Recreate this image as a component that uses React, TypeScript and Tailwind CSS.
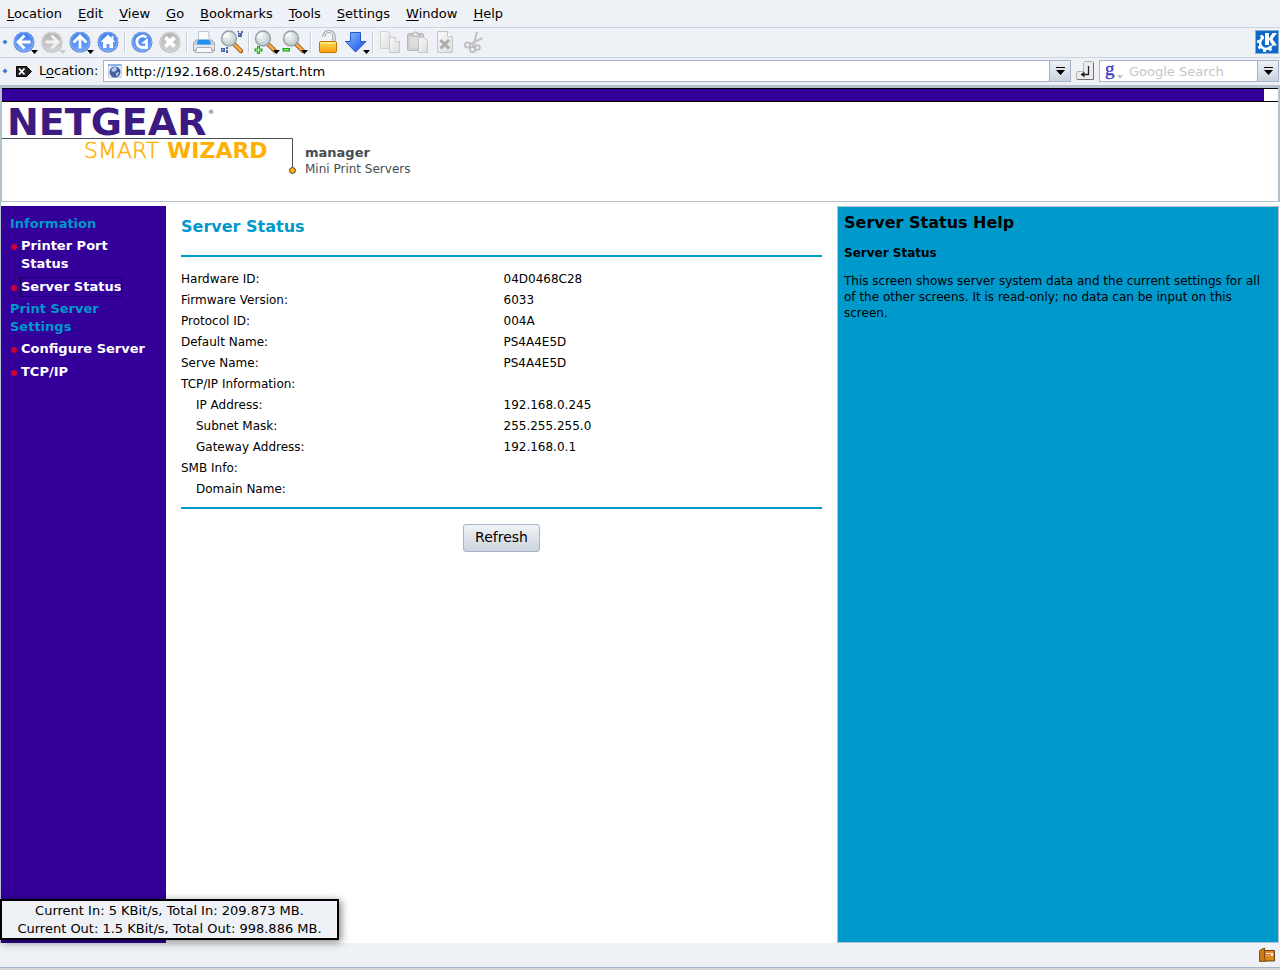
import React from 'react';

const menus = ['Location', 'Edit', 'View', 'Go', 'Bookmarks', 'Tools', 'Settings', 'Window', 'Help'];

const serverInfo = [
  { label: 'Hardware ID:', value: '04D0468C28' },
  { label: 'Firmware Version:', value: '6033' },
  { label: 'Protocol ID:', value: '004A' },
  { label: 'Default Name:', value: 'PS4A4E5D' },
  { label: 'Serve Name:', value: 'PS4A4E5D' },
  { label: 'TCP/IP Information:', value: '' },
  { label: 'IP Address:', value: '192.168.0.245', indent: true },
  { label: 'Subnet Mask:', value: '255.255.255.0', indent: true },
  { label: 'Gateway Address:', value: '192.168.0.1', indent: true },
  { label: 'SMB Info:', value: '' },
  { label: 'Domain Name:', value: '', indent: true },
];

const navGroups = [
  { title: 'Information', links: ['Printer Port Status', 'Server Status'] },
  { title: 'Print Server Settings', links: ['Configure Server', 'TCP/IP'] },
];

// Shared gradients for all toolbar icons
const IconDefs = () => (
  <svg width="0" height="0" className="absolute" aria-hidden="true">
    <defs>
      <linearGradient id="blue" x1="0" y1="0" x2="0" y2="1">
        <stop offset="0" stopColor="#3d7bea" />
        <stop offset="1" stopColor="#6fa6ff" />
      </linearGradient>
      <linearGradient id="grey" x1="0" y1="0" x2="0" y2="1">
        <stop offset="0" stopColor="#b4b4b4" />
        <stop offset="1" stopColor="#d0d0d0" />
      </linearGradient>
      <linearGradient id="gold" x1="0" y1="0" x2="0" y2="1">
        <stop offset="0" stopColor="#ffe05a" />
        <stop offset="1" stopColor="#ff9a08" />
      </linearGradient>
      <linearGradient id="arrow" x1="0" y1="0" x2="1" y2="1">
        <stop offset="0" stopColor="#8cc4ff" />
        <stop offset="1" stopColor="#1246e0" />
      </linearGradient>
      <radialGradient id="lens" cx="0.4" cy="0.35" r="0.7">
        <stop offset="0" stopColor="#f4f8f8" />
        <stop offset="1" stopColor="#b4c4c8" />
      </radialGradient>
      <linearGradient id="paper" x1="0" y1="0" x2="1" y2="1">
        <stop offset="0" stopColor="#fafafa" />
        <stop offset="1" stopColor="#dcdcdc" />
      </linearGradient>
    </defs>
  </svg>
);

interface OrbProps {
  disabled?: boolean;
  children: React.ReactNode;
}

const Orb: React.FC<OrbProps> = ({ disabled, children }) => (
  <g>
    <circle cx="14" cy="14.5" r="10.6" fill="#b9bfca" />
    <circle cx="14" cy="14" r="10.3" fill={disabled ? '#c0c0c0' : '#3c6fd6'} />
    <circle cx="14" cy="14" r="9.4" fill={disabled ? 'url(#grey)' : 'url(#blue)'} stroke={disabled ? '#d8d8d8' : '#8cb4fa'} strokeWidth="1" />
    {children}
  </g>
);

const DropMark = ({ disabled }: { disabled?: boolean }) => (
  <path d="M21 22h7l-3.500 4z" fill={disabled ? '#c8c8c8' : '#000'} />
);

const Magnifier = () => (
  <g>
    <path d="M16.500 16.500l6.500 6.500" stroke="#8a5a1c" strokeWidth="4.500" strokeLinecap="round" />
    <path d="M17 17l5.800 5.800" stroke="#f5a843" strokeWidth="2.800" strokeLinecap="round" />
    <circle cx="11" cy="10.500" r="7.500" fill="url(#lens)" stroke="#98a2a5" strokeWidth="1.400" />
    <path d="M6 9.500a5 5 0 0 1 5-4" stroke="#fff" strokeWidth="1.500" fill="none" />
  </g>
);

interface ToolProps {
  label: string;
  disabled?: boolean;
  children: React.ReactNode;
}

const Tool: React.FC<ToolProps> = ({ label, disabled, children }) => (
  <button type="button" aria-label={label} disabled={disabled} className="h-7 w-7 shrink-0">
    <svg viewBox="0 0 28 28" className="h-7 w-7 overflow-visible" aria-hidden="true">
      {children}
    </svg>
  </button>
);

const Separator = () => (
  <div className="flex h-7 w-[6px] shrink-0 items-center justify-center">
    <div className="h-[21px] w-[2px] border-l border-[#c5ced9] bg-white" />
  </div>
);

const Handle = () => (
  <svg viewBox="0 0 10 10" className="h-[10px] w-[10px] shrink-0" aria-hidden="true">
    <path d="M5 2.500L7.500 5 5 7.500 2.500 5z" fill="#3c7ac8" />
  </svg>
);

const Toolbar = () => (
  <div className="flex h-[29px] items-center pb-px" role="toolbar" aria-label="Main">
    <Handle />
    <Tool label="Back">
      <Orb>
        <path d="M20.500 14H8.500M14.500 7.500L8 14l6.500 6.500" stroke="#fff" strokeWidth="2.800" fill="none" />
      </Orb>
      <DropMark />
    </Tool>
    <Tool label="Forward" disabled>
      <Orb disabled>
        <path d="M7.500 14h12M13.500 7.500L20 14l-6.500 6.500" stroke="#f2f2f2" strokeWidth="2.800" fill="none" />
      </Orb>
      <DropMark disabled />
    </Tool>
    <Tool label="Up">
      <Orb>
        <path d="M14 20.500v-12M7.500 14.500L14 8l6.500 6.500" stroke="#fff" strokeWidth="2.800" fill="none" />
      </Orb>
      <DropMark />
    </Tool>
    <Tool label="Home">
      <Orb>
        <path d="M14 6.500l7.500 7.500H19v6h-3.500v-4h-3v4H9v-6H6.500z" fill="#fff" />
        <path d="M17.500 8h2v4h-2z" fill="#fff" />
      </Orb>
    </Tool>
    <Separator />
    <Tool label="Reload">
      <Orb>
        <path d="M18.500 9.500A5.800 5.800 0 1 0 14 19.500h4.500V15" stroke="#fff" strokeWidth="2.800" fill="none" />
        <path d="M13 15.500L19.900 10v5.500z" fill="#fff" />
      </Orb>
    </Tool>
    <Tool label="Stop" disabled>
      <Orb disabled>
        <path d="M9.500 9.500l9 9M18.500 9.500l-9 9" stroke="#fff" strokeWidth="4" />
      </Orb>
    </Tool>
    <Separator />
    <Tool label="Print">
      <path d="M8.500 3.500h10l1 10h-11z" fill="#fbfbfd" stroke="#c0c4ce" />
      <path d="M6 12l-2.500 3v8h21v-8L22 12h-2v3H8v-3z" fill="#c9ccd8" stroke="#9a9daa" strokeWidth="0.800" />
      <path d="M8.500 11.500H19l2 5H7z" fill="#1e90f0" />
      <path d="M4 17h20v4H4z" fill="#e5e7ef" />
      <path d="M7 19.500h14l1.500 5h-17z" fill="#f7f7f9" stroke="#9b9eac" strokeWidth="0.800" />
    </Tool>
    <Tool label="Find">
      <Magnifier />
      <path d="M3 20h4v4H3zM8 19h2v2H8zM20 5h4v4h-4zM19.500 3H21v1.500h-1.500zM23 3h2v2h-2zM8 22h2v3H8z" fill="#4668a8" />
      <path d="M4 21h1.500v1.500H4zM21 6h1v1h-1z" fill="#a8bde4" />
    </Tool>
    <Separator />
    <Tool label="Zoom in">
      <Magnifier />
      <path d="M5 18h3v2.500h2.500v3H8V26H5v-2.500H2.500v-3H5z" fill="#1cae10" />
      <path d="M6 19.500h1v2h2v1H7v2H6v-2H4v-1h2z" fill="#caffb8" />
      <DropMark />
    </Tool>
    <Tool label="Zoom out">
      <Magnifier />
      <path d="M2.500 20H10v3.500H2.500z" fill="#1cae10" />
      <path d="M4 21.300h4.500v1H4z" fill="#baffaa" />
      <DropMark />
    </Tool>
    <Separator />
    <Tool label="Security">
      <path d="M10 8.500a5 5 0 0 1 10 0V14" stroke="#8d949b" strokeWidth="3.200" fill="none" />
      <path d="M10 8.500a5 5 0 0 1 10 0V14" stroke="#eef0f2" strokeWidth="1.400" fill="none" />
      <rect x="5.500" y="13.500" width="17" height="11" rx="1" fill="url(#gold)" stroke="#b8730c" />
      <path d="M7 15h14" stroke="#fff3a8" />
    </Tool>
    <Tool label="Download">
      <path d="M8.500 4.500h10v9h5.500L13.500 24 3.500 13.500h5z" fill="url(#arrow)" stroke="#2656c8" />
      <DropMark />
    </Tool>
    <Separator />
    <Tool label="Copy" disabled>
      <path d="M4.500 3.500h7l3 3v14h-10z" fill="url(#paper)" stroke="#d2d2d2" />
      <path d="M13.500 9.500h6l4 4v11h-10z" fill="url(#paper)" stroke="#c8c8c8" />
      <path d="M19.500 9.500v4h4" fill="#fff" stroke="#c8c8c8" />
    </Tool>
    <Tool label="Paste" disabled>
      <rect x="3.500" y="5.500" width="16" height="17" rx="1.500" fill="#cfcfcf" stroke="#b8b8b8" />
      <path d="M6 7.500h11v12H6z" fill="#dedede" />
      <path d="M7 8V6h2.500a2 2 0 0 1 4 0H16v2z" fill="#f0f0f0" stroke="#a8a8a8" />
      <path d="M14.500 9.500h6l3 3v12h-9z" fill="url(#paper)" stroke="#c4c4c4" />
    </Tool>
    <Tool label="Delete" disabled>
      <path d="M5.500 3.500h10l5 5v16h-15z" fill="url(#paper)" stroke="#c8c8c8" />
      <path d="M15.500 3.500v5h5" fill="#fff" stroke="#c8c8c8" />
      <path d="M8.500 12l8.500 8.500M17 12l-8.500 8.500" stroke="#acacac" strokeWidth="3" />
    </Tool>
    <Tool label="Cut" disabled>
      <path d="M17 4l-4 15M22.500 10L9.500 16.500" stroke="#c4c4c4" strokeWidth="2.200" />
      <circle cx="7.500" cy="17" r="2.600" fill="none" stroke="#bcbcbc" strokeWidth="1.800" />
      <circle cx="12.500" cy="21.500" r="2.600" fill="none" stroke="#bcbcbc" strokeWidth="1.800" />
      <circle cx="17.500" cy="19.500" r="2.400" fill="none" stroke="#bcbcbc" strokeWidth="1.800" />
    </Tool>
    <svg viewBox="0 0 24 24" className="mr-px ml-auto h-6 w-6" role="img" aria-label="KDE">
      <rect x="0.500" y="0.500" width="23" height="23" fill="#0968c8" stroke="#8eaed0" />
      <circle cx="11" cy="13" r="6" fill="none" stroke="#fff" strokeWidth="2.600" />
      <circle cx="11" cy="13" r="8" fill="none" stroke="#fff" strokeWidth="2.400" strokeDasharray="2.800 3.483" />
      <path d="M9 1h14v14.500H9z" fill="#0968c8" />
      <path d="M10 3h4v12h-4zM14 8.500L17.500 3H22l-4.500 6 4.500 6.500h-4.500L14 9.500z" fill="#fff" />
    </svg>
  </div>
);

const ComboArrow = ({ label }: { label: string }) => (
  <button
    type="button"
    aria-label={label}
    className="flex h-full w-[21px] shrink-0 items-center justify-center border-l border-[#a5b4c8] bg-linear-to-b from-[#eef1f5] to-[#ccd4de]"
  >
    <svg viewBox="0 0 9 9" className="h-[9px] w-[9px]" aria-hidden="true">
      <path d="M0 0h9v1H0zM0 3h9L4.500 8z" />
    </svg>
  </button>
);

const LocationBar = () => (
  <div className="flex h-7 items-center border-t border-[#cbd5df] pr-px pb-px">
    <Handle />
    <button type="button" aria-label="Clear location" className="ml-[6px] h-[11px] w-4 shrink-0">
      <svg viewBox="0 0 16 11" className="h-[11px] w-4" aria-hidden="true">
        <path d="M.5.500h10l5 5-5 5H.5z" fill="#222" stroke="#000" />
        <path d="M3 2.500l5.500 6M8.500 2.500L3 8.500" stroke="#fff" strokeWidth="1.800" />
      </svg>
    </button>
    <label htmlFor="location" className="mr-[5px] ml-[7px] shrink-0">
      L<span className="underline underline-offset-2">o</span>cation:
    </label>
    <div className="flex h-[22px] min-w-0 flex-1 items-center border border-[#a5b4c8] bg-white">
      <svg viewBox="0 0 16 16" className="mr-[2px] ml-[3px] h-4 w-4 shrink-0" aria-hidden="true">
        <path d="M1.500 1.500h13v13h-13z" fill="#e6edf8" stroke="#c4d0e4" />
        <path d="M1 1h13v2H1z" fill="#8bb4ee" />
        <circle cx="8" cy="9" r="5.500" fill="#455f9e" />
        <path d="M4 7l3-3 3 1-1 3-3 1zM9 10l3-1-1 3-2 1z" fill="#b9cdf0" />
      </svg>
      <input id="location" type="text" defaultValue="http://192.168.0.245/start.htm" className="h-full min-w-0 flex-1 outline-none" />
      <ComboArrow label="Location history" />
    </div>
    <button type="button" aria-label="Go" className="mx-[5px] h-5 w-[18px] shrink-0">
      <svg viewBox="0 0 18 20" className="h-5 w-[18px]" aria-hidden="true">
        <path d="M8.500.500h8a1 1 0 0 1 1 1v17h-16a1 1 0 0 1-1-1v-6a1 1 0 0 1 1-1h6v-9z" fill="#ececec" stroke="#b4b4b4" />
        <path d="M1 18.500h16.500V2" fill="none" stroke="#6f6f6f" />
        <path d="M12.500 5v8.500H7" fill="none" stroke="#222" strokeWidth="1.300" />
        <path d="M8.500 10.500v6l-4-3z" fill="#222" />
      </svg>
    </button>
    <div className="flex h-[22px] w-[180px] shrink-0 items-center border border-[#a5b4c8] bg-white">
      <svg viewBox="0 0 22 18" className="mr-1 ml-[3px] h-[18px] w-[22px] shrink-0 overflow-visible" aria-hidden="true">
        <text x="2" y="13" fontSize="19" fill="#3c3cc8" stroke="#3c3cc8" strokeWidth="0.400" fontFamily="'Liberation Serif', serif">g</text>
        <path d="M14 13h6l-3 4z" fill="#c8c8c8" />
      </svg>
      <input type="text" aria-label="Google Search" placeholder="Google Search" className="h-full min-w-0 flex-1 outline-none placeholder:text-[#c3c7cb]" />
      <ComboArrow label="Search engines" />
    </div>
  </div>
);

const Logo = () => (
  <svg viewBox="0 0 420 80" className="h-20 w-[420px] overflow-visible" role="img" aria-label="NETGEAR SmartWizard manager, Mini Print Servers">
    <text x="5" y="33" fontSize="38" fontWeight="700" fill="#3b1b82">NETGEAR</text>
    <text x="206" y="12" fontSize="6" fill="#3b1b82">®</text>
    <path d="M0 36.500h290.500V66" fill="none" stroke="#444c54" />
    <text x="82" y="56" fontSize="22" fontWeight="200" fill="#ffb000" stroke="#ffb000" strokeWidth="0.500">SMART</text>
    <text x="165" y="56" fontSize="22" fontWeight="700" fill="#ffb000">WIZARD</text>
    <circle cx="290.500" cy="68.500" r="3" fill="#ffb000" stroke="#444c54" />
    <text x="303" y="55" fontSize="13" fontWeight="700" fill="#444c54">manager</text>
    <text x="303" y="71" fontSize="12" fill="#444c54">Mini Print Servers</text>
  </svg>
);

const Sidebar = () => (
  <nav className="flex w-[165px] shrink-0 flex-col gap-1 bg-[#330099] px-[9px] pt-[9px] leading-[18px] font-bold">
    {navGroups.map((group) => (
      <section key={group.title}>
        <h2 className="mb-1 text-[#0099cc]">{group.title}</h2>
        <ul className="flex flex-col gap-[5px] text-white">
          {group.links.map((link) => (
            <li key={link} className="flex">
              <span className="mt-[7px] mr-1 ml-px h-[6px] w-[6px] shrink-0 rounded-full bg-[#cc0033]" />
              <a
                href="#"
                className={link === 'Server Status' ? 'outline-1 outline-dotted outline-black' : undefined}
              >
                {link}
              </a>
            </li>
          ))}
        </ul>
      </section>
    ))}
  </nav>
);

const StatusPage = () => (
  <main className="min-w-0 flex-1 bg-white px-[15px] pt-[11px]">
    <h1 className="text-base leading-5 font-bold text-[#0099cc]">Server Status</h1>
    <table className="mt-[18px] w-full table-fixed border-separate border-spacing-0 border-y-2 border-[#0099cc] pt-[11px] pb-2 text-left text-xs">
      <tbody>
        {serverInfo.map((row) => (
          <tr key={row.label} className="h-[21px]">
            <th scope="row" className={row.indent ? 'pl-[15px] font-normal' : 'font-normal'}>{row.label}</th>
            <td className="pl-[2px]">{row.value}</td>
          </tr>
        ))}
      </tbody>
    </table>
    <div className="mt-[15px] flex justify-center">
      <button
        type="button"
        className="h-7 rounded-[3px] border border-[#a5b4c8] bg-linear-to-b from-[#f0f3f6] to-[#ccd4de] px-[11px] pb-[2px] text-sm"
      >
        Refresh
      </button>
    </div>
  </main>
);

const HelpPane = () => (
  <aside className="w-[442px] shrink-0 border border-[#b4c2cc] bg-[#0099cc] px-[6px] pt-[6px]">
    <h2 className="text-base leading-5 font-bold">Server Status Help</h2>
    <h3 className="mt-3 text-xs font-bold">Server Status</h3>
    <p className="mt-3 text-xs">
      This screen shows server system data and the current settings for all of the other screens. It is read-only; no
      data can be input on this screen.
    </p>
  </aside>
);

const App: React.FC = () => {
  return (
    <div className="relative flex min-h-screen flex-col bg-[#eef1f6] font-['DejaVu_Sans',sans-serif] text-[13px] text-black">
      <IconDefs />
      <div className="flex h-7 items-center gap-4 border-b border-[#cbd5df] px-[7px]" role="menubar">
        {menus.map((name) => (
          <button key={name} type="button" role="menuitem">
            <span className="underline underline-offset-2">{name[0]}</span>
            {name.slice(1)}
          </button>
        ))}
      </div>
      <Toolbar />
      <LocationBar />
      <header className="h-[117px] border-x-2 border-t-[3px] border-b border-[#b4c2cc] bg-white">
        <div className="h-[14px] border-y border-black pr-[14px]">
          <div className="h-full bg-[#330099]" />
        </div>
        <Logo />
      </header>
      <div className="flex flex-1 border-l border-[#b4c2cc] bg-white pt-1 pr-px">
        <Sidebar />
        <StatusPage />
        <HelpPane />
      </div>
      <footer className="border-b-2 border-[#d4d6d9]">
        <div className="flex h-[25px] items-center justify-end border-b border-[#a5b4c8] pr-[5px]">
          <svg viewBox="0 0 16 16" className="h-4 w-4" role="img" aria-label="Wallet">
            <path d="M4 3.500h11.500v10.500H4z" fill="#dd8a1a" stroke="#6d430c" />
            <path d="M7 6h7v3H7z" fill="#fff0c8" />
            <path d="M7 7h5v1.500H7z" fill="#f0562c" />
            <path d="M.5 3.500l5-2.500v10l2 3-7 .500z" fill="#c87a14" stroke="#7d5014" />
          </svg>
        </div>
      </footer>
      <div
        role="status"
        className="absolute bottom-[30px] left-0 w-[339px] border-2 border-black bg-[#eef1f6] pt-px text-center leading-[18px] shadow-[2px_2px_8px_rgba(0,0,0,0.5)]"
      >
        <p>Current In: 5 KBit/s, Total In: 209.873 MB.</p>
        <p>Current Out: 1.5 KBit/s, Total Out: 998.886 MB.</p>
      </div>
    </div>
  );
};

export default App;
